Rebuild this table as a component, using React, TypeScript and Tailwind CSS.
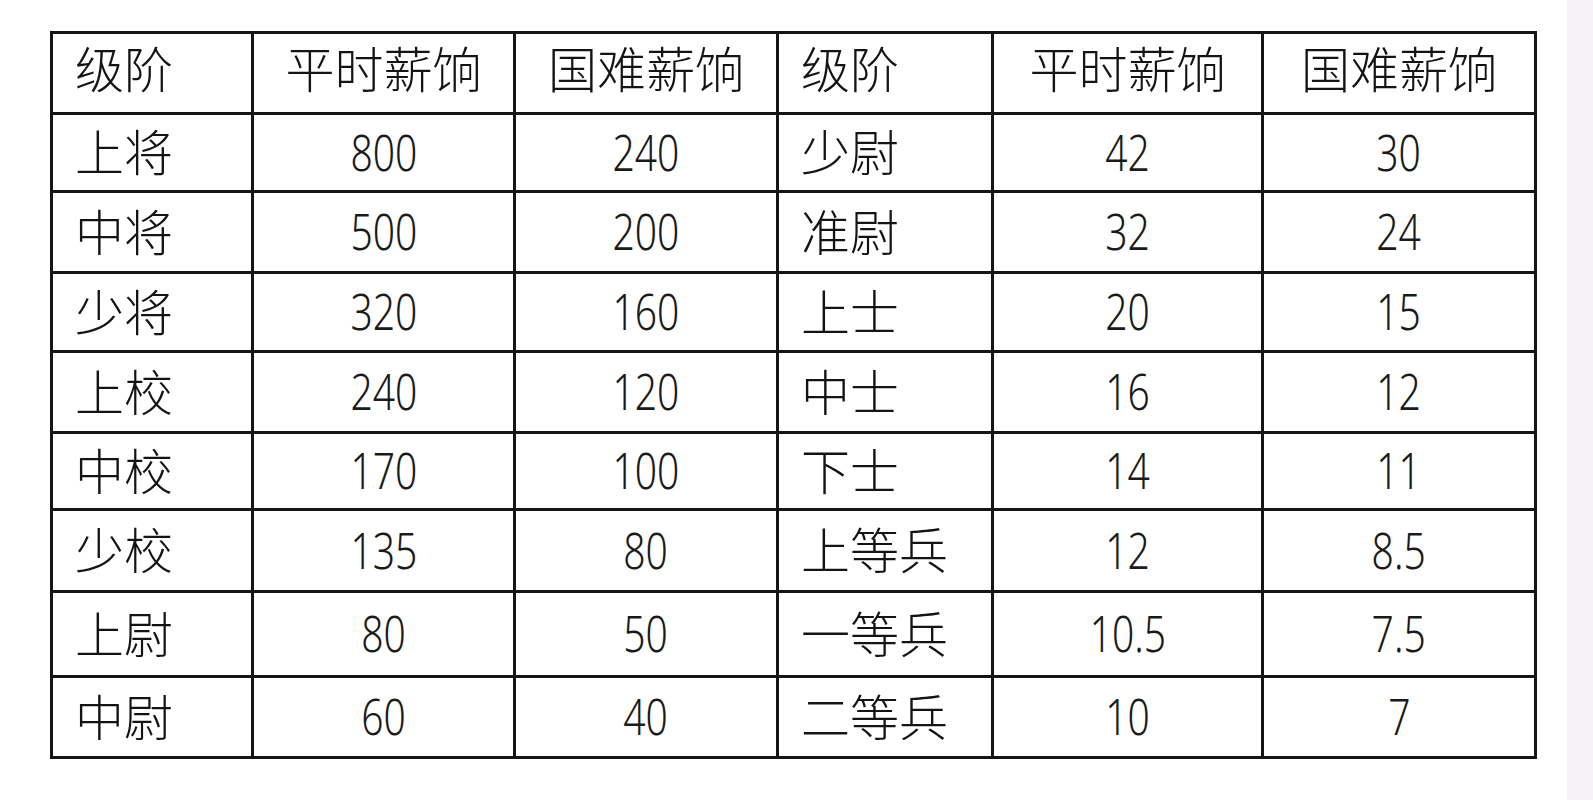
import React from "react";

const rows: [string, string, string, string, string, string][] = [
  ["上将", "800", "240", "少尉", "42", "30"],
  ["中将", "500", "200", "准尉", "32", "24"],
  ["少将", "320", "160", "上士", "20", "15"],
  ["上校", "240", "120", "中士", "16", "12"],
  ["中校", "170", "100", "下士", "14", "11"],
  ["少校", "135", "80", "上等兵", "12", "8.5"],
  ["上尉", "80", "50", "一等兵", "10.5", "7.5"],
  ["中尉", "60", "40", "二等兵", "10", "7"],
];

const cjk = "font-['Noto_Sans_CJK_SC','Noto_Sans_CJK_JP',sans-serif] font-light text-[49px] leading-none text-[#141414]";

function Label({ text, center, head }: { text: string; center?: boolean; head?: boolean }) {
  return (
    <div className={`bg-white flex items-center ${center ? "justify-center" : "pl-[22px]"}`}>
      <span className={`${cjk} ${head ? "-translate-y-[7px]" : "-translate-y-[3px]"}`}>{text}</span>
    </div>
  );
}

function Num({ text }: { text: string }) {
  return (
    <div className="bg-white flex items-center justify-center">
      <span className="inline-block font-['Noto_Sans',sans-serif] font-light text-[50px] leading-none text-[#1a1a1a] scale-x-78 -translate-y-[1px]">
        {text}
      </span>
    </div>
  );
}

export default function App() {
  return (
    <div className="w-[1593px] h-[800px] bg-white flex overflow-hidden">
      <div className="flex-1 pl-[50px] pt-[31px]">
        <div className="inline-grid bg-[#151515] p-[3px] gap-[3px] grid-cols-[198px_259px_260px_212px_267px_270px] grid-rows-[78px_75px_78px_76px_78px_74px_79px_82px_78px]">
          <Label text="级阶" head />
          <Label text="平时薪饷" center head />
          <Label text="国难薪饷" center head />
          <Label text="级阶" head />
          <Label text="平时薪饷" center head />
          <Label text="国难薪饷" center head />
          {rows.map((r, i) => (
            <React.Fragment key={i}>
              <Label text={r[0]} />
              <Num text={r[1]} />
              <Num text={r[2]} />
              <Label text={r[3]} />
              <Num text={r[4]} />
              <Num text={r[5]} />
            </React.Fragment>
          ))}
        </div>
      </div>
      <div className="w-[26px] h-full bg-[#f6f3f7]" />
    </div>
  );
}
